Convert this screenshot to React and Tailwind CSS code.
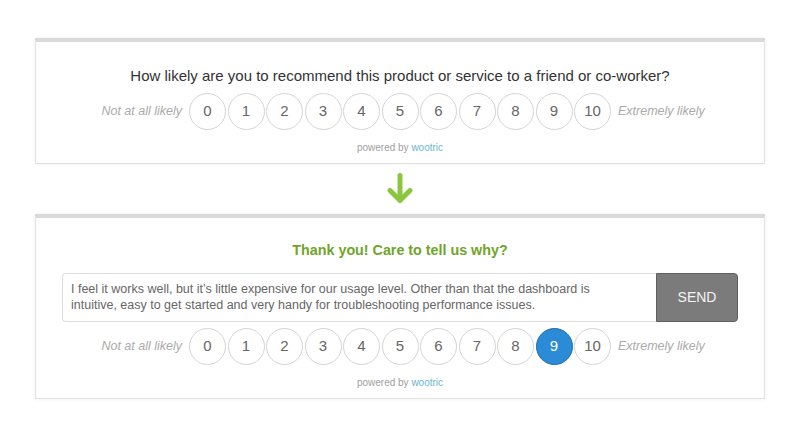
const scores = [0, 1, 2, 3, 4, 5, 6, 7, 8, 9, 10];

function ScoreRow({ selected }) {
  return (
    <div className="grid grid-cols-[1fr_auto_1fr] items-center">
      <span className="justify-self-end pr-[7px] text-[12.5px] italic text-[#aaaaaa]">Not at all likely</span>
      <div className="flex gap-[1.5px]">
        {scores.map((n) => (
          <div
            key={n}
            className={
              n === selected
                ? 'flex h-[37px] w-[37px] items-center justify-center rounded-full border border-[#1e6fb0] bg-[#2b8bd6] text-[15px] text-white'
                : 'flex h-[37px] w-[37px] items-center justify-center rounded-full border border-[#d4d4d4] bg-white text-[15px] text-[#666666]'
            }
          >
            {n}
          </div>
        ))}
      </div>
      <span className="justify-self-start pl-[7px] text-[12.5px] italic text-[#aaaaaa]">Extremely likely</span>
    </div>
  );
}

function PoweredBy() {
  return (
    <p className="text-center text-[10px] leading-[14px] text-[#a0a0a0]">
      powered by <span className="text-[#6cb6d2]">wootric</span>
    </p>
  );
}

export default function App() {
  return (
    <div className="min-h-screen bg-white pt-[38px] font-['Liberation_Sans',Arial,sans-serif]">
      <div className="mx-auto w-[730px] border border-t-4 border-[#e2e2e2] border-t-[#dadada] bg-white pt-[24px] pb-[8px] shadow-[0_0_3px_rgba(0,0,0,0.08)]">
        <h2 className="text-center text-[15px] leading-[20px] text-[#333333]">
          How likely are you to recommend this product or service to a friend or co-worker?
        </h2>
        <div className="mt-[7px]">
          <ScoreRow selected={null} />
        </div>
        <div className="mt-[11px]">
          <PoweredBy />
        </div>
      </div>

      <div className="flex justify-center pt-[9px] pb-[10px]">
        <svg width="26" height="31" viewBox="0 0 26 31" fill="none">
          <path d="M13 2.5V27" stroke="#8cc63f" strokeWidth="5" strokeLinecap="round" />
          <path d="M3 17.5L13 27.5L23 17.5" stroke="#8cc63f" strokeWidth="5" strokeLinecap="round" strokeLinejoin="round" />
        </svg>
      </div>

      <div className="mx-auto w-[730px] border border-t-4 border-[#e2e2e2] border-t-[#dadada] bg-white pt-[23px] pb-[8px] shadow-[0_0_3px_rgba(0,0,0,0.08)]">
        <h2 className="text-center text-[14.3px] font-bold leading-[19px] text-[#6fa52a]">
          Thank you! Care to tell us why?
        </h2>
        <div className="mx-auto mt-[13px] flex h-[49px] w-[676px]">
          <div className="flex-1 rounded-l-[4px] border border-r-0 border-[#dddddd] pl-[8px] pr-[20px] pt-[7px] text-[12.5px] leading-[16px] text-[#666666]">
            I feel it works well, but it’s little expensive for our usage level. Other than that the dashboard is intuitive, easy to get started and very handy for troubleshooting performance issues.
          </div>
          <button className="w-[82px] rounded-r-[4px] border border-[#5f5f5f] bg-[#7b7b7b] text-[14px] text-[#f4f4f4]">
            SEND
          </button>
        </div>
        <div className="mt-[6px]">
          <ScoreRow selected={9} />
        </div>
        <div className="mt-[11px]">
          <PoweredBy />
        </div>
      </div>
    </div>
  );
}
